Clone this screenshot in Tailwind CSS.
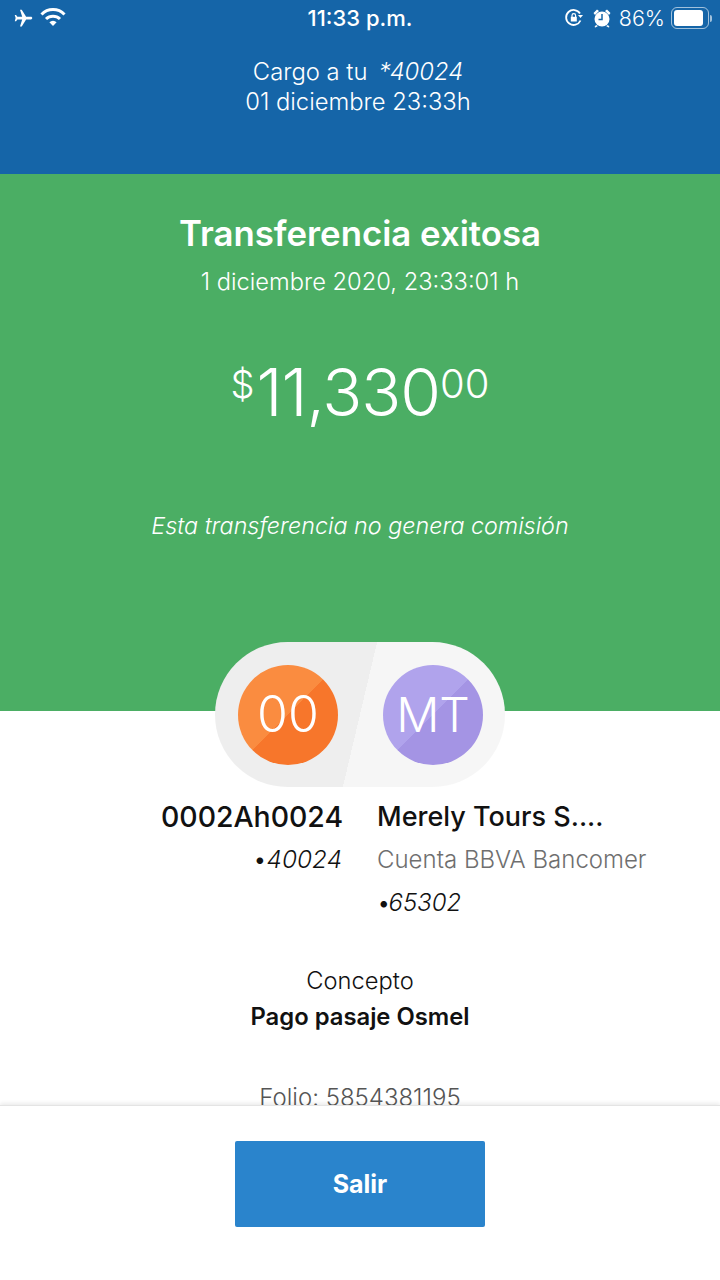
<!DOCTYPE html>
<html lang="es">
<head>
    <meta charset="UTF-8">
    <meta name="viewport" content="width=device-width, initial-scale=1.0">
    <title>Transferencia exitosa</title>
    <script src="https://cdn.jsdelivr.net/npm/@tailwindcss/browser@4"></script>
</head>
<body class="bg-white font-['Inter','Liberation_Sans',sans-serif]">
    <div class="w-[720px] h-[1280px] flex flex-col overflow-hidden">
        <!-- header -->
        <header class="h-[174px] shrink-0 bg-[#1565a8] text-white">
            <div class="h-[36px] pl-[13px] pr-[8px] flex items-center justify-between relative">
                <div class="flex items-center gap-[6px]">
                    <svg class="w-[21px] h-[21px]" viewBox="0 0 24 24" fill="#fff"><path transform="rotate(90 12 12)" d="M21 16v-2l-8-5V3.500c0-.83-.67-1.500-1.500-1.500S10 2.670 10 3.500V9l-8 5v2l8-2.500V19l-2 1.500V22l3.500-1 3.500 1v-1.500L13 19v-5.500l8 2.500z"/></svg>
                    <svg class="w-[26px] h-[20px] -mt-[3px]" viewBox="0 0 26 20" fill="none" stroke="#fff" stroke-width="3"><path d="M1.500 7.500a16 16 0 0 1 23 0"/><path d="M6 12a10 10 0 0 1 14 0"/><path d="M13 19l-3.600-3.700a5 5 0 0 1 7.200 0z" fill="#fff" stroke="none"/></svg>
                </div>
                <span class="absolute left-0 w-[720px] text-center text-[22px] font-medium">11:33 p.m.</span>
                <div class="flex items-center">
                    <svg class="w-[20px] h-[20px] mr-[8px]" viewBox="0 0 20 20" fill="none" stroke="#fff" stroke-width="1.800"><path d="M16.500 12.500A7.500 7.500 0 1 1 16 5.500"/><path d="M14 7h5l-2.500 3z" fill="#fff" stroke="none"/><rect x="6.800" y="8.800" width="6" height="4.700" fill="#fff" stroke="none"/><path d="M8 9V7.500a1.800 1.800 0 0 1 3.600 0V9" stroke-width="1.200"/></svg>
                    <svg class="w-[20px] h-[20px] mr-[7px]" viewBox="0 0 20 20" fill="#fff"><circle cx="10" cy="11" r="7.500"/><path d="M1.500 5 5 1.500l2 1.500-4 4zM18.500 5 15 1.500l-2 1.500 4 4zM4 17l-1.500 2 1 .5L6 18zM16 17l1.500 2-1 .5L14 18z"/><path d="M10 6v5.500H6.500" fill="none" stroke="#1565a8" stroke-width="1.500"/></svg>
                    <span class="text-[21.500px] font-light mr-[6px]">86%</span>
                    <div class="w-[38px] h-[22px] rounded-[6px] border border-white/60 p-[2px]">
                        <div class="w-[29px] h-full rounded-[3px] bg-white"></div>
                    </div>
                    <div class="w-[2px] h-[7px] rounded-r-sm bg-white/60 ml-[1px]"></div>
                </div>
            </div>
            <div class="mt-[21px] text-center text-[23.800px] leading-[30px] font-light -ml-[4px]">
                <p>Cargo a tu&nbsp; <em class="-ml-[2px]">*40024</em></p>
                <p>01 diciembre 23:33h</p>
            </div>
        </header>

        <!-- green summary -->
        <section class="h-[537px] shrink-0 bg-[#4bae64] text-white text-center">
            <h1 class="pt-[38px] text-[34.800px] leading-[42px] font-semibold">Transferencia exitosa</h1>
            <p class="mt-[13px] text-[23.700px] leading-[30px] font-light">1 diciembre 2020, 23:33:01 h</p>
            <div class="mt-[55px] flex justify-center items-start font-light">
                <span class="text-[38px] leading-[46px] mt-[9px] mr-[2px]">$</span>
                <span class="text-[66px] leading-[80px] tracking-[-1px]">11,330</span>
                <span class="text-[40px] leading-[46px] mt-[9px]">00</span>
            </div>
            <p class="mt-[79px] text-[23.300px] leading-[30px] font-light italic">Esta transferencia no genera comisión</p>
        </section>

        <!-- detail -->
        <section class="flex-1 min-h-0 text-[#111]">
            <div class="relative -mt-[69px] mx-auto w-[290px] h-[145px] rounded-full overflow-hidden bg-[linear-gradient(103.300deg,#eeeeee_50%,#f6f6f6_50%)] flex items-center justify-between pl-[23px] pr-[22px]">
                <div class="w-[100px] h-[100px] rounded-full bg-[linear-gradient(135deg,#fa8c40_50%,#f7762b_50%)] flex items-center justify-center text-white text-[50px] font-light">00</div>
                <div class="w-[100px] h-[100px] rounded-full bg-[linear-gradient(135deg,#b0a3ec_50%,#a494e4_50%)] flex items-center justify-center text-white text-[48px] font-light">MT</div>
            </div>
            <div class="mt-[12px] pl-[161px] flex gap-[35px]">
                <div class="w-[181px] text-right">
                    <p class="text-[28.400px] leading-[36px] font-medium whitespace-nowrap">0002Ah0024</p>
                    <p class="mt-[6px] text-[24.400px] leading-[36px] font-light italic"><span class="not-italic">•</span>40024</p>
                </div>
                <div>
                    <p class="text-[27px] leading-[36px] font-medium whitespace-nowrap">Merely Tours S....</p>
                    <p class="mt-[7px] text-[24px] leading-[36px] font-light text-[#6f6f6f] whitespace-nowrap">Cuenta BBVA Bancomer</p>
                    <p class="mt-[7px] text-[24px] leading-[36px] font-light italic"><span class="not-italic">•</span><span class="-ml-[2px]">65302</span></p>
                </div>
            </div>
            <div class="mt-[42px] text-center">
                <p class="text-[23.700px] leading-[36px] font-light">Concepto</p>
                <p class="text-[23.800px] leading-[36px] font-semibold">Pago pasaje Osmel</p>
                <p class="mt-[45px] text-[24px] leading-[36px] font-light text-[#555]">Folio: 5854381195</p>
            </div>
        </section>

        <!-- footer -->
        <footer class="h-[175px] shrink-0 bg-white border-t border-[#e4e4e4] shadow-[0_-2px_4px_rgba(0,0,0,0.08)] relative flex justify-center pt-[35px]">
            <button class="w-[250px] h-[86px] rounded-[2px] bg-[#2a84cc] text-white text-[25px] font-bold pt-[2px]">Salir</button>
        </footer>
    </div>
</body>
</html>
